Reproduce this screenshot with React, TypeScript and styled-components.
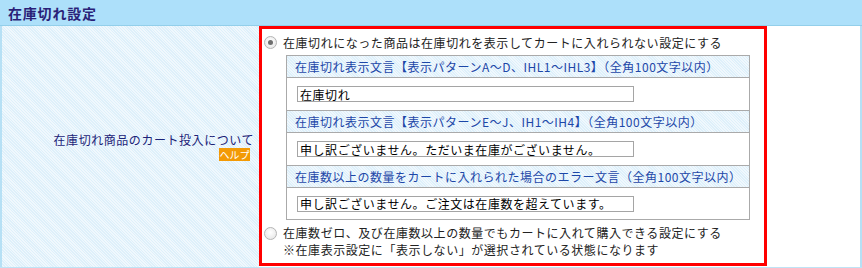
import React from "react";
import styled, { createGlobalStyle } from "styled-components";

const GlobalStyle = createGlobalStyle`
  html, body { margin: 0; padding: 0; background: #ffffff; }
  body { font-family: "Noto Sans CJK JP", "Noto Sans", sans-serif; font-size: 12px; }
`;

const hatch = `
  background-color: #f0f8fd;
  background-image: repeating-linear-gradient(45deg, rgba(200,230,247,0.45) 0 1px, transparent 1px 2px);
`;

const Page = styled.div`
  width: 862px;
  height: 268px;
  overflow: hidden;
`;

const SectionHeader = styled.div`
  height: 25px;
  background: #ade0fa;
  border-bottom: 1px solid #93cfea;
  display: flex;
  align-items: center;
  padding-left: 8px;
  font-size: 14px;
  font-weight: bold;
  letter-spacing: 0.8px;
  color: #2a1f78;
`;

const Row = styled.div`
  display: flex;
  height: 241px;
  border-bottom: 1px solid #bfe3f5;
`;

const LabelCell = styled.div`
  width: 257px;
  ${hatch}
  border-left: 2px solid #b6e0f5;
  display: flex;
  flex-direction: column;
  align-items: flex-end;
  justify-content: center;
`;

const LabelText = styled.div`
  color: #1c2378;
  letter-spacing: 0.55px;
  line-height: 14px;
  padding-right: 5px;
`;

const HelpBadge = styled.span`
  display: inline-flex;
  align-items: center;
  justify-content: center;
  width: 31px;
  height: 13px;
  margin-right: 9px;
  margin-top: 1px;
  background: #f39a05;
  color: #ffffff;
  font-size: 10px;
  line-height: 13px;
`;

const ValueCell = styled.div`
  flex: 1;
  background: #ffffff;
  border-right: 2px solid #b6e0f5;
`;

const RedBox = styled.div`
  height: 234px;
  border: 3px solid #ff0000;
  padding: 0 16px 0 2px;
  width: 484px;
  display: flex;
  flex-direction: column;
`;

const RadioLine = styled.label<{ $top?: boolean }>`
  display: flex;
  align-items: ${(p) => (p.$top ? "flex-start" : "center")};
  height: ${(p) => (p.$top ? "auto" : "26px")};
  margin-top: ${(p) => (p.$top ? "4px" : "0")};
  color: #222222;
  letter-spacing: 0.55px;
`;

const RadioDot = styled.span<{ $checked?: boolean }>`
  flex: none;
  width: 11px;
  height: 11px;
  border-radius: 50%;
  border: 1px solid #b4b4b4;
  background: radial-gradient(circle at 50% 40%, #ffffff 0%, #e2e2e2 100%);
  display: flex;
  align-items: center;
  justify-content: center;
  margin-right: 6px;
  margin-top: ${(p) => (p.$checked ? "0" : "3px")};
  &::after {
    content: "";
    display: ${(p) => (p.$checked ? "block" : "none")};
    width: 5px;
    height: 5px;
    border-radius: 50%;
    background: #6e6e6e;
  }
`;

const RadioTexts = styled.div`
  line-height: 17px;
`;

const InnerTable = styled.div`
  margin-left: 22px;
  width: 462px;
  border: 1px solid #aaaaaa;
  display: flex;
  flex-direction: column;
`;

const HeadRow = styled.div`
  height: 21px;
  ${hatch}
  border-bottom: 1px solid #aaaaaa;
  display: flex;
  align-items: center;
  padding-left: 8px;
  color: #1d47a8;
  letter-spacing: 0.5px;
  white-space: nowrap;
`;

const InputRow = styled.div<{ $last?: boolean }>`
  height: ${(p) => (p.$last ? "31px" : "32px")};
  background: #ffffff;
  border-bottom: ${(p) => (p.$last ? "none" : "1px solid #aaaaaa")};
  display: flex;
  align-items: center;
  padding-left: 10px;
`;

const TextInput = styled.input`
  width: 337px;
  height: 16px;
  box-sizing: border-box;
  border: 1px solid #a5a5a5;
  padding: 0 2px;
  margin: 0;
  font-family: "Noto Sans CJK JP", "Noto Sans", sans-serif;
  font-size: 12px;
  letter-spacing: 0.55px;
  color: #000000;
  background: #ffffff;
  outline: none;
`;

const fields = [
  {
    head: "在庫切れ表示文言【表示パターンA～D、IHL1～IHL3】（全角100文字以内）",
    value: "在庫切れ",
  },
  {
    head: "在庫切れ表示文言【表示パターンE～J、IH1～IH4】（全角100文字以内）",
    value: "申し訳ございません。ただいま在庫がございません。",
  },
  {
    head: "在庫数以上の数量をカートに入れられた場合のエラー文言（全角100文字以内）",
    value: "申し訳ございません。ご注文は在庫数を超えています。",
  },
];

export default function App() {
  return (
    <Page>
      <GlobalStyle />
      <SectionHeader>在庫切れ設定</SectionHeader>
      <Row>
        <LabelCell>
          <LabelText>在庫切れ商品のカート投入について</LabelText>
          <HelpBadge>ヘルプ</HelpBadge>
        </LabelCell>
        <ValueCell>
          <RedBox>
            <RadioLine>
              <RadioDot $checked />
              在庫切れになった商品は在庫切れを表示してカートに入れられない設定にする
            </RadioLine>
            <InnerTable>
              {fields.map((f, i) => (
                <React.Fragment key={i}>
                  <HeadRow>{f.head}</HeadRow>
                  <InputRow $last={i === fields.length - 1}>
                    <TextInput defaultValue={f.value} />
                  </InputRow>
                </React.Fragment>
              ))}
            </InnerTable>
            <RadioLine $top>
              <RadioDot />
              <RadioTexts>
                <div>在庫数ゼロ、及び在庫数以上の数量でもカートに入れて購入できる設定にする</div>
                <div>※在庫表示設定に「表示しない」が選択されている状態になります</div>
              </RadioTexts>
            </RadioLine>
          </RedBox>
        </ValueCell>
      </Row>
    </Page>
  );
}
